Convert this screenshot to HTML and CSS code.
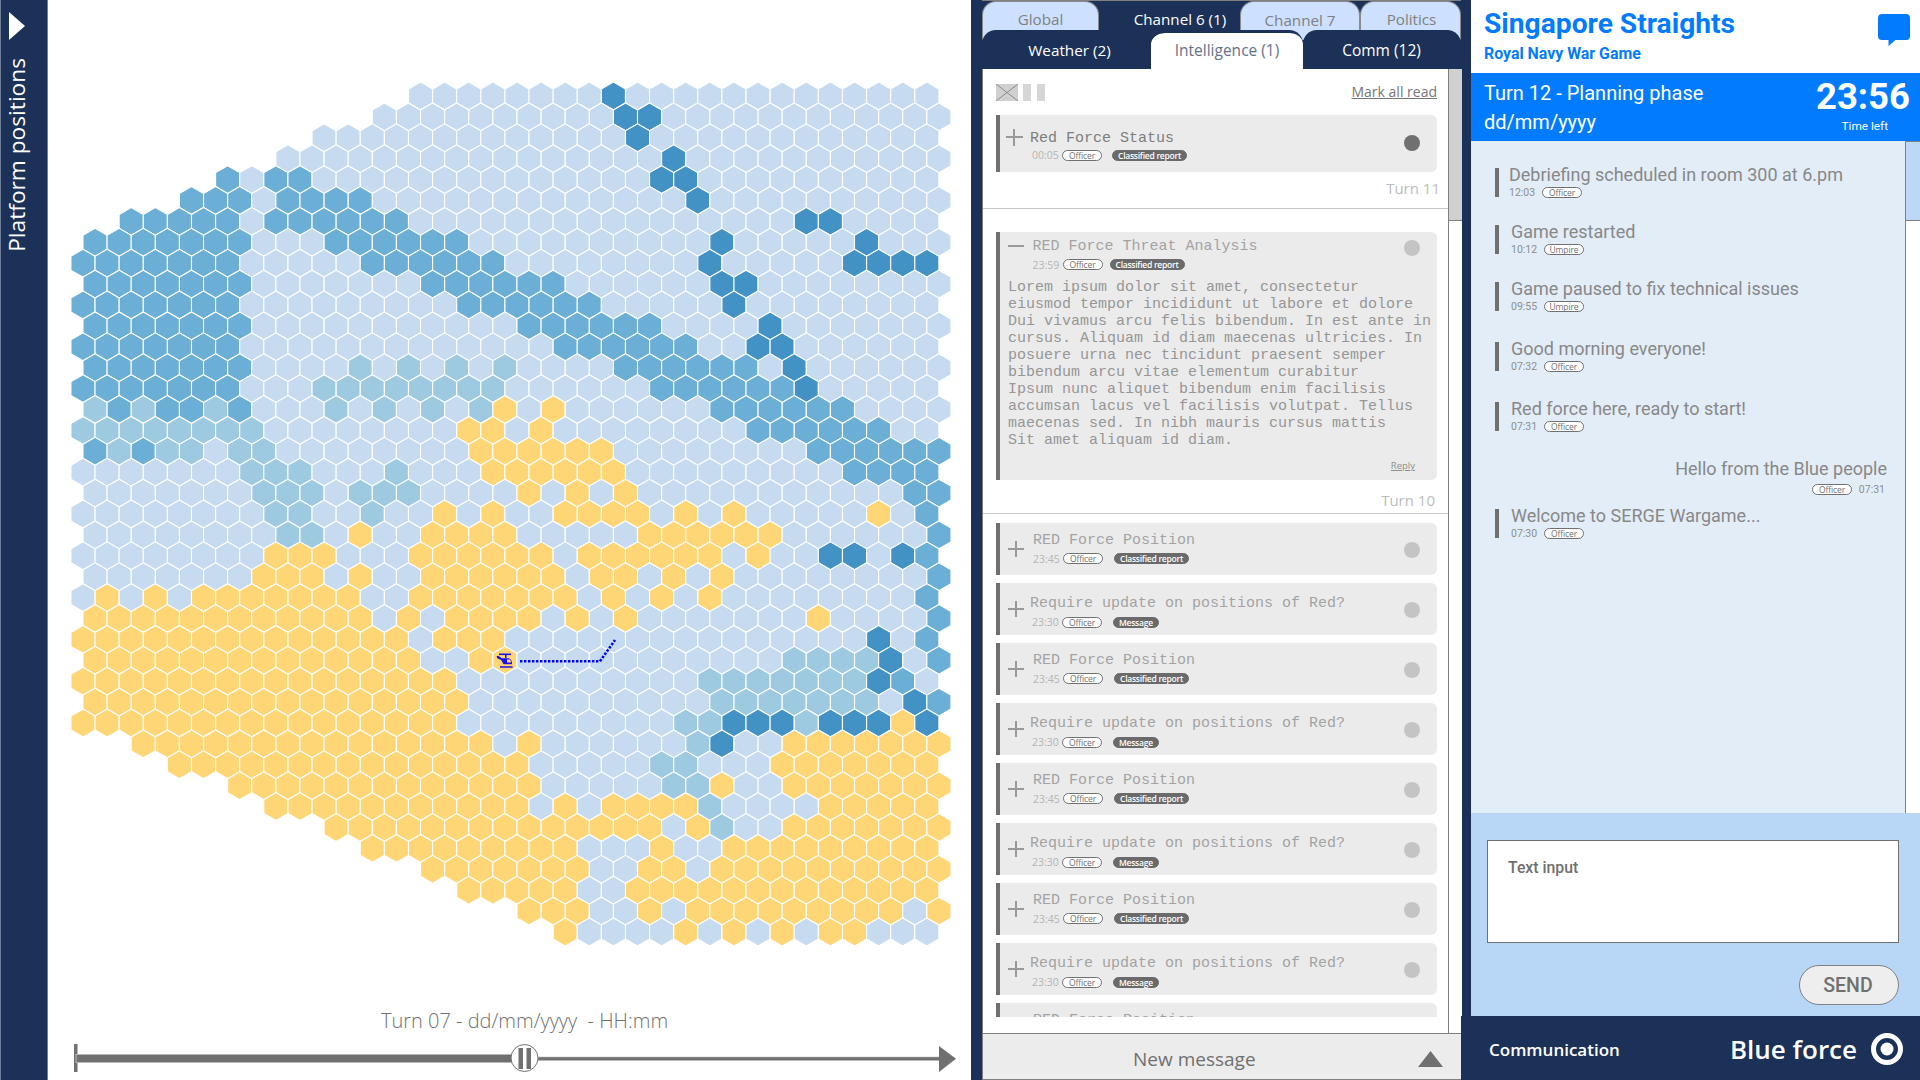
FILE: index.html
```html
<!DOCTYPE html>
<html lang="en">
<head>
<meta charset="utf-8">
<title>Singapore Straights</title>
<link rel="stylesheet" href="styles.css">
</head>
<body>
<div class="app">
  <aside class="rail">
    <svg class="rail-arrow" width="16" height="28" viewBox="0 0 16 28"><polygon points="0,0 16,14 0,28"/></svg>
    <div class="rail-title">Platform positions</div>
  </aside>

  <main class="map-pane">
    <svg id="map" class="map" viewBox="48 0 923 990" width="923" height="990">
      <g id="cells"></g>
      <polyline class="route" points="520,661.3 600,661.3 615,640"/>
      <g class="heli">
        <path d="M499 653.5h12v1.6h-12z"/>
        <path d="M505 655h1.6v3h-1.6z"/>
        <path d="M496.5 656.5l1.6-.8 4 2.5h6.5q3.5 1 3.5 6h-8.5l-2.5-4.3-3.6-1.5z"/>
        <path d="M500 666.2h12.6v1.6h-12.6z"/>
        <path class="heli-window" d="M507 659.6h2.8q1.2 1 1.2 2.9h-4z"/>
      </g>
    </svg>
    <div class="timeline">
      <div class="timeline-label">Turn 07 - dd/mm/yyyy&nbsp; - HH:mm</div>
      <svg class="slider" viewBox="48 1043 923 30" width="923" height="30">
        <rect class="s-fill" x="74" y="1044" width="3.5" height="28"/>
        <rect class="s-thick" x="76" y="1054.5" width="436" height="8"/>
        <rect class="s-thin" x="538" y="1057" width="403" height="3.5"/>
        <polygon class="s-fill" points="939,1046 956,1058.7 939,1072"/>
        <circle class="s-knob" cx="524.5" cy="1058" r="13.5"/>
        <rect class="s-fill" x="518.5" y="1048" width="4.5" height="21"/>
        <rect class="s-fill" x="526.5" y="1048" width="4.5" height="21"/>
      </svg>
    </div>
  </main>

  <section class="comms">
    <nav class="tabs-top">
      <div class="tab tab-light tab-global">Global</div>
      <div class="tab tab-dark tab-channel6">Channel 6 (1)</div>
      <div class="tab tab-light tab-channel7">Channel 7</div>
      <div class="tab tab-light tab-politics">Politics</div>
    </nav>
    <nav class="tabs-sub">
      <div class="subtab subtab-weather">Weather (2)</div>
      <div class="subtab subtab-active">Intelligence (1)</div>
      <div class="subtab subtab-comm">Comm (12)</div>
    </nav>
    <div class="feed-wrap">
      <div class="feed">
        <div class="feed-inner">
          <div class="toolbar">
            <div class="toolbar-icons">
              <svg class="tool-x" width="22" height="17" viewBox="0 0 22 17"><rect width="22" height="17"/><path d="M0 0L22 17M22 0L0 17"/></svg>
              <span class="tool-bar"></span>
              <span class="tool-bar"></span>
            </div>
            <a class="mark-read">Mark all read</a>
          </div>

          <article class="card card-first">
            <span class="plus plus-first"></span>
            <div class="card-body">
              <div class="card-title title-unread">Red Force Status</div>
              <div class="meta meta-first"><span class="time">00:05</span><span class="pill">Officer</span><span class="pill pill-dark pill-gap-10">Classified report</span></div>
            </div>
            <span class="dot dot-unread"></span>
          </article>
          <div class="turn turn-11">Turn 11</div>
          <hr class="divider">

          <article class="card card-open">
            <div class="open-head">
              <span class="minus"></span>
              <div class="card-body">
                <div class="card-title">RED Force Threat Analysis</div>
                <div class="meta meta-open"><span class="time">23:59</span><span class="pill">Officer</span><span class="pill pill-dark pill-gap-8">Classified report</span></div>
              </div>
              <span class="dot"></span>
            </div>
            <p class="open-text">Lorem ipsum dolor sit amet, consectetur<br>eiusmod tempor incididunt ut labore et dolore<br>Dui vivamus arcu felis bibendum. In est ante in<br>cursus. Aliquam id diam maecenas ultricies. In<br>posuere urna nec tincidunt praesent semper<br>bibendum arcu vitae elementum curabitur<br>Ipsum nunc aliquet bibendum enim facilisis<br>accumsan lacus vel facilisis volutpat. Tellus<br>maecenas sed. In nibh mauris cursus mattis<br>Sit amet aliquam id diam.</p>
            <a class="reply">Reply</a>
          </article>
          <div class="turn turn-10">Turn 10</div>
          <hr class="divider divider-10">

          <article class="card card-row">
            <span class="plus"></span>
            <div class="card-body body-pos">
              <div class="card-title">RED Force Position</div>
              <div class="meta"><span class="time">23:45</span><span class="pill">Officer</span><span class="pill pill-dark pill-gap-11">Classified report</span></div>
            </div>
            <span class="dot"></span>
          </article>
          <article class="card card-row">
            <span class="plus"></span>
            <div class="card-body body-req">
              <div class="card-title">Require update on positions of Red?</div>
              <div class="meta meta-req"><span class="time">23:30</span><span class="pill">Officer</span><span class="pill pill-dark pill-gap-11">Message</span></div>
            </div>
            <span class="dot"></span>
          </article>
          <article class="card card-row">
            <span class="plus"></span>
            <div class="card-body body-pos">
              <div class="card-title">RED Force Position</div>
              <div class="meta"><span class="time">23:45</span><span class="pill">Officer</span><span class="pill pill-dark pill-gap-11">Classified report</span></div>
            </div>
            <span class="dot"></span>
          </article>
          <article class="card card-row">
            <span class="plus"></span>
            <div class="card-body body-req">
              <div class="card-title">Require update on positions of Red?</div>
              <div class="meta meta-req"><span class="time">23:30</span><span class="pill">Officer</span><span class="pill pill-dark pill-gap-11">Message</span></div>
            </div>
            <span class="dot"></span>
          </article>
          <article class="card card-row">
            <span class="plus"></span>
            <div class="card-body body-pos">
              <div class="card-title">RED Force Position</div>
              <div class="meta"><span class="time">23:45</span><span class="pill">Officer</span><span class="pill pill-dark pill-gap-11">Classified report</span></div>
            </div>
            <span class="dot"></span>
          </article>
          <article class="card card-row">
            <span class="plus"></span>
            <div class="card-body body-req">
              <div class="card-title">Require update on positions of Red?</div>
              <div class="meta meta-req"><span class="time">23:30</span><span class="pill">Officer</span><span class="pill pill-dark pill-gap-11">Message</span></div>
            </div>
            <span class="dot"></span>
          </article>
          <article class="card card-row">
            <span class="plus"></span>
            <div class="card-body body-pos">
              <div class="card-title">RED Force Position</div>
              <div class="meta"><span class="time">23:45</span><span class="pill">Officer</span><span class="pill pill-dark pill-gap-11">Classified report</span></div>
            </div>
            <span class="dot"></span>
          </article>
          <article class="card card-row">
            <span class="plus"></span>
            <div class="card-body body-req">
              <div class="card-title">Require update on positions of Red?</div>
              <div class="meta meta-req"><span class="time">23:30</span><span class="pill">Officer</span><span class="pill pill-dark pill-gap-11">Message</span></div>
            </div>
            <span class="dot"></span>
          </article>
          <article class="card card-row">
            <span class="plus"></span>
            <div class="card-body body-pos">
              <div class="card-title">RED Force Position</div>
            </div>
          </article>
        </div>
      </div>
      <div class="scroll"><div class="scroll-thumb"></div></div>
    </div>
    <footer class="new-message">
      <span class="new-message-label">New message</span>
      <svg class="new-message-arrow" width="25" height="16" viewBox="0 0 25 16"><polygon points="12.5,0 25,16 0,16"/></svg>
    </footer>
  </section>

  <section class="side">
    <header class="side-head">
      <div>
        <h1 class="side-title">Singapore Straights</h1>
        <div class="side-sub">Royal Navy War Game</div>
      </div>
      <svg class="chat-icon" width="32" height="32" viewBox="0 0 32 32"><path d="M4 0h24a4 4 0 0 1 4 4v18a4 4 0 0 1-4 4H17.500L10.500 32V26H4a4 4 0 0 1-4-4V4a4 4 0 0 1 4-4z"/></svg>
    </header>
    <div class="turn-bar">
      <div class="turn-info">
        <div class="turn-name">Turn 12 - Planning phase</div>
        <div class="turn-date">dd/mm/yyyy</div>
      </div>
      <div class="clock">
        <div class="clock-time">23:56</div>
        <div class="clock-label">Time left</div>
      </div>
    </div>
    <div class="chat-wrap">
      <div class="chat">
        <div class="chat-msg chat-tight"><div class="chat-text">Debriefing scheduled in room 300 at 6.pm</div><div class="chat-meta"><span class="chat-time">12:03</span><span class="pill">Officer</span></div></div>
        <div class="chat-msg"><div class="chat-text">Game restarted</div><div class="chat-meta"><span class="chat-time">10:12</span><span class="pill">Umpire</span></div></div>
        <div class="chat-msg chat-gap-31"><div class="chat-text">Game paused to fix technical issues</div><div class="chat-meta"><span class="chat-time">09:55</span><span class="pill">Umpire</span></div></div>
        <div class="chat-msg chat-gap-31"><div class="chat-text">Good morning everyone!</div><div class="chat-meta"><span class="chat-time">07:32</span><span class="pill">Officer</span></div></div>
        <div class="chat-msg chat-gap-31"><div class="chat-text">Red force here, ready to start!</div><div class="chat-meta"><span class="chat-time">07:31</span><span class="pill">Officer</span></div></div>
        <div class="chat-own"><div class="chat-text">Hello from the Blue people</div><div class="chat-meta chat-meta-own"><span class="pill">Officer</span><span class="chat-time">07:31</span></div></div>
        <div class="chat-msg"><div class="chat-text">Welcome to SERGE Wargame...</div><div class="chat-meta"><span class="chat-time">07:30</span><span class="pill">Officer</span></div></div>
      </div>
      <div class="chat-scroll"><div class="chat-thumb"></div></div>
    </div>
    <div class="composer">
      <div class="composer-input">Text input</div>
      <button class="send">SEND</button>
    </div>
    <footer class="side-foot">
      <span class="foot-label">Communication</span>
      <span class="foot-force">Blue force</span>
      <svg class="foot-target" width="32" height="32" viewBox="0 0 32 32"><circle class="target-ring" cx="16" cy="16" r="13.500"/><circle class="target-dot" cx="16" cy="16" r="6.500"/></svg>
    </footer>
  </section>
</div>
<script src="app.js"></script>
</body>
</html>
```

FILE: styles.css
```css
* { box-sizing: border-box; }
html, body { margin: 0; padding: 0; background: #fff; }
body { font-family: "Open Sans", "Liberation Sans", sans-serif; }
.app { display: flex; width: 1920px; height: 1080px; overflow: hidden; }

/* rail */
.rail { width: 48px; flex: none; background: #1b3157; border-left: 1px solid #6f7f99; border-right: 1px solid #6f7f99; display: flex; flex-direction: column; padding: 12px 0 0 8px; }
.rail-arrow { fill: #fff; flex: none; }
.rail-title { writing-mode: vertical-rl; transform: rotate(180deg); color: #fff; font-size: 22.7px; font-weight: 400; line-height: 24px; margin-top: 18px; margin-left: -4px; align-self: flex-start; white-space: nowrap; }

/* map */
.map-pane { width: 923px; flex: none; display: flex; flex-direction: column; }
.map { display: block; flex: none; }
.hex { stroke: #fff; stroke-width: 1.1; }
.hex-L { fill: #c6dbef; }
.hex-B { fill: #6baed6; }
.hex-D { fill: #4292c6; }
.hex-T { fill: #9ecae1; }
.hex-Y { fill: #ffd676; }
.route { fill: none; stroke: #0000ff; stroke-width: 2.6; stroke-dasharray: 2.4 1.6; }
.heli { fill: #1a10ee; }
.heli-window { fill: #ffd676; }
.timeline { display: flex; flex-direction: column; flex: none; }
.timeline-label { color: #707070; font-size: 20px; font-weight: 300; line-height: 26px; height: 53px; padding-top: 18px; text-align: center; width: 953px; }
.slider { display: block; }
.s-fill { fill: #707070; }
.s-thick { fill: #707070; stroke: #b9b9b9; stroke-width: 1; }
.s-thin { fill: #707070; stroke: #b9b9b9; stroke-width: .6; }
.s-knob { fill: #fff; stroke: #707070; stroke-width: 1; }

/* comms */
.comms { width: 500px; flex: none; background: #1b3157; padding: 0 10px 0 11px; display: flex; flex-direction: column; }
.tabs-top { display: flex; height: 40px; flex: none; border-top: 1px solid #808080; }
.tab { height: 39px; border-radius: 14px 14px 0 0; font-size: 15.2px; line-height: 36px; text-align: center; }
.tab-light { background: #cde0ff; color: #808080; border: 1px solid #8a8a8a; border-bottom: 0; }
.tab-dark { background: #1b3157; color: #fff; }
.tab-global { width: 117px; line-height: 34px; }
.tab-channel6 { width: 141px; padding-left: 21px; }
.tab-channel7 { width: 120px; }
.tab-politics { width: 101px; padding-left: 2px; line-height: 34px; }
.tabs-sub { display: flex; height: 39px; flex: none; margin-top: -10px; position: relative; }
.subtab { height: 39px; border-radius: 14px 14px 0 0; background: #1b3157; color: #fff; font-size: 15.3px; line-height: 40px; text-align: center; }
.subtab-weather { width: 169px; padding-left: 6px; }
.subtab-active { width: 152px; background: #fff; border-top: 3px solid #1b3157; color: #65728a; line-height: 35px; background-clip: padding-box; font-size: 15.5px; }
.subtab-comm { width: 158px; padding-right: 1px; font-size: 15.5px; }

.feed-wrap { flex: 1; display: flex; min-height: 0; background: #fff; border-left: 1px solid #808080; }
.feed { width: 465px; height: 948px; overflow: hidden; flex: none; }
.feed-inner { display: flex; flex-direction: column; }
.scroll { width: 14px; flex: none; border-left: 1px solid #808080; background: #fff; }
.scroll-thumb { height: 152px; background: #d0d0d0; border-bottom: 1px solid #808080; }

.toolbar { height: 46px; flex: none; padding: 15px 11px 0 13px; display: flex; justify-content: space-between; align-items: flex-start; }
.toolbar-icons { display: flex; gap: 5px; }
.tool-x { display: block; }
.tool-x rect { fill: #d0d0d0; }
.tool-x path { stroke: #8c8c8c; stroke-width: 1; fill: none; }
.tool-bar { width: 8px; height: 17px; background: #d6d6d6; }
.tool-bar + .tool-bar { margin-left: 1px; }
.mark-read { color: #777; font-size: 14px; line-height: 16px; text-decoration: underline; }

.card { position: relative; display: flex; flex: none; margin: 0 11px 0 13px; background: #ebebeb; border-left: 4px solid #707070; border-radius: 0 6px 6px 0; }
.card-first { height: 57px; align-items: flex-start; }
.card-row { height: 52px; margin-bottom: 8px; }
.card-body { flex: 1; min-width: 0; }
.card-title { font-family: "Liberation Mono", monospace; font-size: 15px; line-height: 18px; color: #a3a3a3; white-space: pre; }
.title-unread { color: #7d7d7d; }
.plus { position: relative; width: 16px; height: 16px; flex: none; margin: 18px 0 0 8px; }
.plus::before, .plus::after { content: ""; position: absolute; background: #999; }
.plus::before { left: 0; right: 0; top: 7px; height: 2px; }
.plus::after { top: 0; bottom: 0; left: 7px; width: 2px; }
.plus-first { margin: 14px 0 0 6px; width: 17px; height: 17px; }
.minus { width: 16px; height: 2px; flex: none; margin: 13px 0 0 8px; background: #999; }
.dot { position: absolute; right: 17px; top: 19px; width: 16px; height: 16px; border-radius: 50%; background: #c4c4c4; }
.dot-unread { top: 20px; background: #707070; }
.card-first .card-body { padding: 15px 0 0 7px; }
.body-pos { padding: 9px 0 0 9px; }
.body-req { padding: 11.5px 0 0 6px; }
.meta { display: flex; align-items: center; height: 11px; margin-top: 3px; }
.meta-first { margin-top: 1.5px; padding-left: 2px; }
.meta-req { margin-top: 4px; padding-left: 2px; }
.time { font-family: "Open Sans", sans-serif; width: 30px; flex: none; font-size: 10.5px; color: #b5b5b5; }
.pill { display: inline-block; flex: none; width: 40px; height: 11px; border: 1px solid #707070; border-radius: 6px; background: #fff; color: #707070; font-family: "Open Sans", sans-serif; font-size: 8.5px; line-height: 9px; text-align: center; white-space: nowrap; letter-spacing: -.1px; }
.pill-dark { width: auto; padding: 0 5px; background: #6a6a6a; border-color: #6a6a6a; color: #fff; font-weight: 600; letter-spacing: -.25px; }
.pill-gap-10 { margin-left: 10px; }
.pill-gap-8 { margin-left: 7px; }
.pill-gap-11 { margin-left: 11px; }
.turn { color: #bcbcbc; font-size: 15px; line-height: 20px; text-align: right; flex: none; }
.turn-11 { margin: 6px 8px 0 0; height: 30px; }
.turn-10 { margin: 10px 13px 0 0; height: 23px; }
.divider { border: 0; height: 1px; margin: 0; background: #c6c6c6; flex: none; }
.divider-10 { margin-bottom: 9px; }
.card-open { display: block; height: 248px; margin-top: 23px; margin-bottom: 0; }
.open-head { position: relative; display: flex; height: 47px; }
.open-head .card-body { padding: 5.5px 0 0 8.5px; }
.open-head .dot { top: 8px; }
.meta-open { margin-top: 3.5px; }
.open-text { margin: 0; padding: 0 0 0 8px; font-family: "Liberation Mono", monospace; font-size: 15px; line-height: 17px; color: #969696; white-space: nowrap; }
.reply { position: absolute; right: 22px; top: 228px; font-size: 9.500px; color: #8f8f8f; text-decoration: underline; line-height: 12px; }

.new-message { height: 47px; flex: none; background: #ececec; border-top: 1px solid #808080; border-bottom: 1px solid #808080; border-left: 1px solid #808080; display: flex; align-items: center; position: relative; padding-top: 4px; }
.new-message-label { color: #707070; font-size: 19px; line-height: 24px; padding-left: 150px; }
.new-message-arrow { fill: #707070; position: absolute; right: 18px; top: 17px; }

/* side */
.side { width: 449px; flex: none; display: flex; flex-direction: column; }
.side-head { height: 73px; flex: none; display: flex; justify-content: space-between; padding: 0 10px 0 13px; color: #027bff; font-family: Roboto, sans-serif; }
.side-title { margin: 7px 0 0; font-size: 28.2px; line-height: 34px; font-weight: 700; }
.side-sub { font-size: 15.9px; line-height: 18px; font-weight: 700; margin-top: 4px; }
.chat-icon { fill: #027bff; margin-top: 14px; flex: none; }
.turn-bar { height: 68px; flex: none; background: #027bff; color: #fff; font-family: Roboto, sans-serif; display: flex; justify-content: space-between; padding: 0 10px 0 13px; }
.turn-name { font-size: 20px; line-height: 24px; margin-top: 8px; }
.turn-date { font-size: 20px; line-height: 24px; margin-top: 5px; }
.clock { display: flex; flex-direction: column; align-items: flex-end; }
.clock-time { font-size: 36.5px; font-weight: 700; line-height: 44px; margin-top: 2px; }
.clock-label { font-size: 11.8px; line-height: 16px; margin: -1px 22px 0 0; }
.chat-wrap { flex: 1; min-height: 0; display: flex; }
.chat { flex: 1; background: #e3edf8; padding-top: 27px; font-family: Roboto, sans-serif; overflow: hidden; }
.chat-scroll { width: 15px; flex: none; border-left: 1px solid #808080; background: #fff; }
.chat-thumb { height: 80px; background: #bdd8f7; border-top: 1px solid #808080; border-bottom: 1px solid #808080; }
.chat-msg { margin: 0 0 28px 24px; padding-left: 12px; border-left: 4px solid #707070; height: 29px; }
.chat-tight { padding-left: 10px; }
.chat-gap-31 { margin-bottom: 31px; }
.chat-text { font-size: 18px; line-height: 14px; color: #888; white-space: nowrap; }
.chat-meta { display: flex; align-items: center; height: 11px; margin-top: 5px; }
.chat-time { font-size: 10.5px; color: #8e8e8e; width: 33px; flex: none; }
.chat-own { height: 47px; margin-right: 18px; text-align: right; }
.chat-meta-own { justify-content: flex-end; margin-top: 8px; }
.chat-meta-own .chat-time { width: 35px; text-align: right; padding-right: 2px; }
.composer { height: 203px; flex: none; background: #b8d7f7; padding: 27px 21px 0 16px; display: flex; flex-direction: column; align-items: flex-end; font-family: Roboto, sans-serif; }
.composer-input { width: 100%; height: 103px; background: #fff; border: 1px solid #707070; color: #707070; font-size: 15.8px; font-weight: 500; line-height: 18px; padding: 18px 20px; }
.send { width: 100px; height: 40px; margin-top: 22px; border: 1px solid #808080; border-radius: 20px; background: #eeeeee; color: #707070; font-family: Roboto, sans-serif; font-size: 19.5px; font-weight: 500; padding: 0 2px 0 0; }
.side-foot { height: 64px; flex: none; background: #1b3157; margin-left: -10px; display: flex; align-items: center; padding: 2px 17px 0 28px; color: #fff; }
.foot-label { font-size: 17px; font-weight: 600; flex: 1; }
.foot-force { font-size: 26px; font-weight: 600; margin-right: 14px; }
.foot-target { display: block; }
.target-ring { fill: none; stroke: #fff; stroke-width: 5; }
.target-dot { fill: #fff; }
```

FILE: app.js
```js
// Terrain of the hex map: one run-length encoded row per line.
// . = empty, L = open water, B = blue, D = deep blue, T = teal, Y = land
var ROWS = [
  "14. 8L D 13L", "12. 10L 2D 12L", "10. 13L D 12L", "8. 16L D 11L",
  "6. B L 2B 14L 2D 10L", "4. 3B L 4B 13L D 10L", "2. 5B L 6B 16L 2D 4L",
  "7B 3L 6B 10L D 5L D 3L", "7B 5L 6B 8L D 5L 4D", "7B 7L 6B 6L 2D 8L",
  "7B 9L 6B 5L D 8L", "7B 11L 6B 4L D 7L", "7B 13L 6B 2L 2D 6L",
  "7B 4L T L T L T L T 4L 6B L D 6L", "7B 3L 8T 6L 6B D 5L",
  "T B T 2B T B 3L T L T L T L T Y L Y 6L 6B 4L",
  "8T 8L 2Y L Y 8L 6B 2L", "B T B 2T L 2T 8L 6Y 8L 6B",
  "7L 3T 3L T 3L 6Y 9L 4B", "7L 3T L 3T 4L Y L Y L Y 11L 2B",
  "8L 2T 2L T 2L Y L Y 2L 4Y L Y L Y 5L Y L B",
  "8L 2T L Y 2L 4Y 5L 6Y 6L B",
  "8L 3Y 3L 6Y L 6Y L Y 2L 2D L D B",
  "7L 3Y L Y 2L 6Y L 2Y L Y L Y 8L B",
  "L Y L Y L 7Y 2L 7Y L Y L Y L Y 8L B",
  "12Y L Y L 4Y L Y L Y 7L Y 4L B",
  "14Y L 3Y 15L D L B", "14Y 2L 2Y 11L 4T D L B",
  "16Y 10L 7T D B L", "16Y 10L 7T L D B",
  "16Y 9L 2T 3D T 3D Y D",
  "2. 15Y L Y 6L T D 2L 7Y", "4. 15Y 5L 2T 3L 7Y", "6. 13Y 5L 2T Y 2L 7Y",
  "8. 11Y L Y L 4Y T 4L 5Y", "10. 14Y L Y T 2L 7Y", "12. 9Y 3L Y 2L 9Y",
  "14. 7Y 2L 2Y L 10Y", "16. 5Y 2L 13Y", "18. 3Y 2L Y L 9Y L Y",
  "20. Y 4L Y L Y L Y L 2Y 3L"
];

var PITCH_X = 24.11, PITCH_Y = 20.9, ORIGIN_X = 83, ORIGIN_Y = 96, R = 13.92;
var SVG_NS = "http://www.w3.org/2000/svg";
var cells = document.getElementById("cells");

function hexPoints(cx, cy) {
  var half = PITCH_X / 2, pts = [];
  [[0, -R], [half, -R / 2], [half, R / 2], [0, R], [-half, R / 2], [-half, -R / 2]].forEach(function (p) {
    pts.push((cx + p[0]).toFixed(2) + "," + (cy + p[1]).toFixed(2));
  });
  return pts.join(" ");
}

ROWS.forEach(function (row, r) {
  var c = 0;
  row.split(" ").forEach(function (token) {
    var count = parseInt(token, 10) || 1;
    var kind = token.charAt(token.length - 1);
    for (var i = 0; i < count; i++, c++) {
      if (kind === ".") continue;
      var poly = document.createElementNS(SVG_NS, "polygon");
      poly.setAttribute("class", "hex hex-" + kind);
      poly.setAttribute("points", hexPoints(ORIGIN_X + (r % 2 ? 12.05 : 0) + c * PITCH_X, ORIGIN_Y + r * PITCH_Y));
      cells.appendChild(poly);
    }
  });
});
```
